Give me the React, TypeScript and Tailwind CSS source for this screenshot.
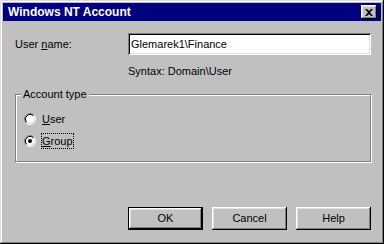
import React, { useState } from 'react';

const font = { fontFamily: '"Liberation Sans", Arial, sans-serif' };

const raised =
  'shadow-[inset_-1px_-1px_#000,inset_1px_1px_#fff,inset_-2px_-2px_#808080,inset_2px_2px_#dfdfdf]';

const Radio: React.FC<{ checked: boolean }> = ({ checked }) => (
  <svg width="12" height="12" viewBox="0 0 12 12" className="shrink-0">
    <circle cx="6" cy="6" r="4.5" fill="#fff" />
    <path d="M2.11 9.89 A5.5 5.5 0 0 1 9.89 2.11" stroke="#808080" fill="none" />
    <path d="M9.89 2.11 A5.5 5.5 0 0 1 2.11 9.89" stroke="#fff" fill="none" />
    <path d="M2.82 9.18 A4.5 4.5 0 0 1 9.18 2.82" stroke="#000" fill="none" />
    <path d="M9.18 2.82 A4.5 4.5 0 0 1 2.82 9.18" stroke="#dfdfdf" fill="none" />
    {checked && <circle cx="6" cy="6" r="2" fill="#000" />}
  </svg>
);

const Button: React.FC<{ label: string; isDefault?: boolean }> = ({ label, isDefault }) => (
  <button
    className={
      'w-[75px] h-[23px] bg-[#c0c0c0] text-[11px] text-black flex items-center justify-center ' +
      (isDefault
        ? 'shadow-[inset_0_0_0_1px_#000,inset_-2px_-2px_#000,inset_2px_2px_#fff,inset_-3px_-3px_#808080,inset_3px_3px_#dfdfdf]'
        : raised)
    }
  >
    {label}
  </button>
);

const App: React.FC = () => {
  const [type, setType] = useState<'user' | 'group'>('group');

  return (
    <div
      style={font}
      className="w-[384px] h-[244px] bg-[#c0c0c0] p-[3px] flex flex-col text-[11px] text-black shadow-[inset_-1px_-1px_#000,inset_1px_1px_#dfdfdf,inset_-2px_-2px_#808080,inset_2px_2px_#fff]"
    >
      <div className="h-[18px] bg-[#000080] flex items-center justify-between pl-[5px] pr-[4px]">
        <span className="text-white font-bold text-[12px] leading-none">Windows NT Account</span>
        <button className={'w-[16px] h-[14px] bg-[#c0c0c0] flex items-center justify-center ' + raised}>
          <svg width="8" height="7" viewBox="0 0 8 7">
            <path d="M0 0h2l2 2 2-2h2L5 3.5 8 7H6L4 5 2 7H0l3-3.5z" fill="#000" />
          </svg>
        </button>
      </div>

      <div className="flex-1 flex flex-col pl-[12px] pr-[10px]">
        <div className="mt-[12px] flex items-center h-[22px]">
          <span className="w-[113px] shrink-0">
            User <span className="underline">n</span>ame:
          </span>
          <div className="flex-1 h-[22px] bg-white flex items-center pl-[3px] shadow-[inset_1px_1px_#808080,inset_-1px_-1px_#fff,inset_2px_2px_#000,inset_-2px_-2px_#dfdfdf]">
            Glemarek1\Finance
          </div>
        </div>

        <div className="mt-[10px] ml-[113px] leading-[13px]">Syntax: Domain\User</div>

        <div className="relative mt-[16px] h-[68px] border border-[#808080] shadow-[inset_1px_1px_#fff,1px_1px_#fff]">
          <span className="absolute -top-[8px] left-[5px] px-[2px] bg-[#c0c0c0] leading-[14px]">
            Account type
          </span>
          <div className="flex flex-col gap-[6px] pt-[16px] pl-[8px]">
            <div className="flex items-center h-[16px]" onClick={() => setType('user')}>
              <Radio checked={type === 'user'} />
              <span className="ml-[5px] border border-transparent leading-[14px]">
                <span className="underline">U</span>ser
              </span>
            </div>
            <div className="flex items-center h-[16px]" onClick={() => setType('group')}>
              <Radio checked={type === 'group'} />
              <span className="ml-[5px] border border-dotted border-black leading-[14px]">
                <span className="underline">G</span>roup
              </span>
            </div>
          </div>
        </div>

        <div className="mt-auto mb-[11px] flex justify-end gap-[9px]">
          <Button label="OK" isDefault />
          <Button label="Cancel" />
          <Button label="Help" />
        </div>
      </div>
    </div>
  );
};

export default App;
